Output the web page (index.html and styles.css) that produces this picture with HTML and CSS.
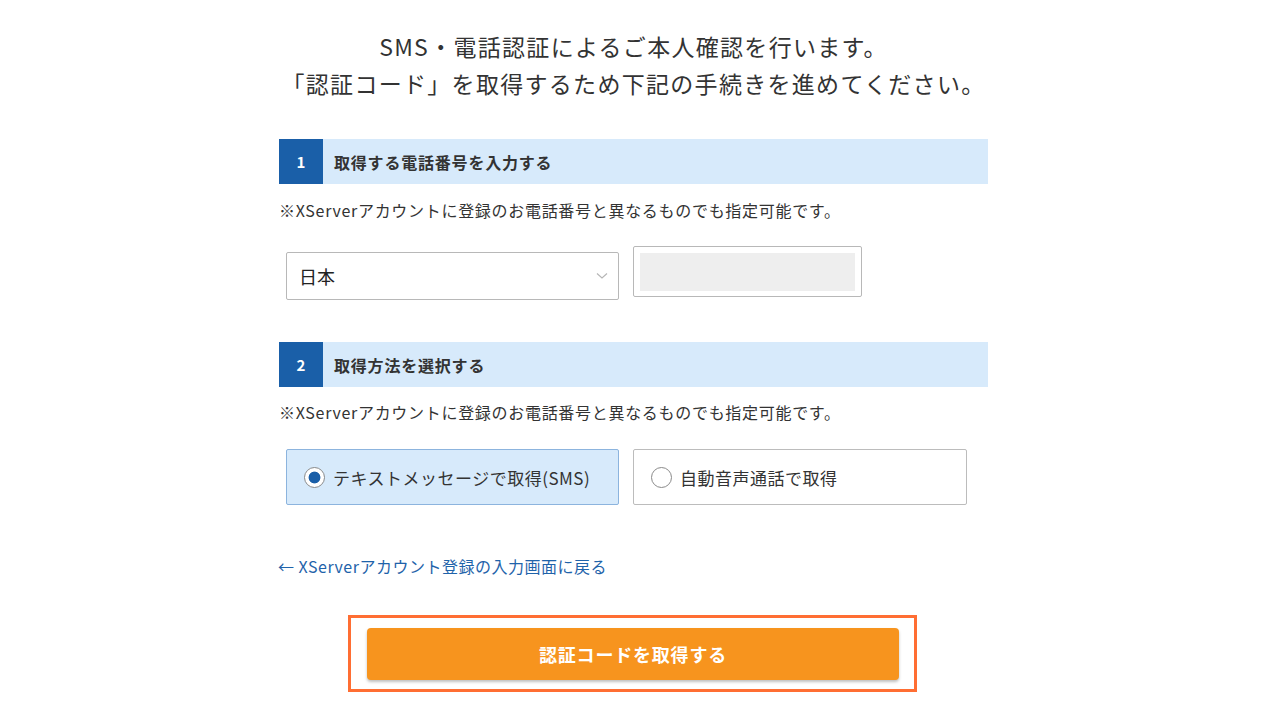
FILE: index.html
```html
<!DOCTYPE html>
<html lang="ja">
<head>
<meta charset="utf-8">
<title>SMS・電話認証</title>
<link rel="stylesheet" href="styles.css">
</head>
<body>
<main class="page">
  <h1 class="title">SMS・電話認証によるご本人確認を行います。<br>「認証コード」を取得するため下記の手続きを進めてください。</h1>

  <section class="step">
    <div class="step-head"><span class="step-num">1</span><span class="step-label">取得する電話番号を入力する</span></div>
    <p class="note">※XServerアカウントに登録のお電話番号と異なるものでも指定可能です。</p>
    <div class="phone-row">
      <div class="select">
        <span class="select-text">日本</span>
        <svg class="chev" width="12" height="8" viewBox="0 0 12 8"><polyline points="1,1.5 6,6 11,1.5" fill="none" stroke="#b5b5b5" stroke-width="1.1"/></svg>
      </div>
      <div class="phone-input"><div class="phone-fill"></div></div>
    </div>
  </section>

  <section class="step step2">
    <div class="step-head"><span class="step-num">2</span><span class="step-label">取得方法を選択する</span></div>
    <p class="note">※XServerアカウントに登録のお電話番号と異なるものでも指定可能です。</p>
    <div class="method-row">
      <div class="method selected"><span class="radio on"></span><span class="method-text">テキストメッセージで取得(SMS)</span></div>
      <div class="method"><span class="radio"></span><span class="method-text">自動音声通話で取得</span></div>
    </div>
  </section>

  <a class="back" href="#">← XServerアカウント登録の入力画面に戻る</a>

  <div class="submit-wrap">
    <div class="submit-frame">
      <button class="submit">認証コードを取得する</button>
    </div>
  </div>
</main>
</body>
</html>
```

FILE: styles.css
```css
html, body {
  margin: 0;
  padding: 0;
  background: #ffffff;
}
body {
  font-family: "Noto Sans CJK JP", "Noto Sans", sans-serif;
  color: #333333;
}
.page {
  width: 709px;
  margin-left: 279px;
  padding-top: 28px;
}
.title {
  margin: 0;
  text-align: center;
  font-size: 23px;
  font-weight: 400;
  line-height: 37px;
  letter-spacing: 1.3px;
  color: #333333;
}
.step {
  margin-top: 37px;
}
.step2 {
  margin-top: 42px;
}
.step-head {
  display: flex;
  align-items: center;
  height: 45px;
  background: #d7eafb;
}
.step-num {
  width: 44px;
  height: 45px;
  background: #1a5fa8;
  color: #ffffff;
  font-weight: 700;
  font-size: 15px;
  display: flex;
  align-items: center;
  justify-content: center;
}
.step-label {
  margin-left: 11px;
  font-size: 16px;
  font-weight: 700;
  letter-spacing: 0.8px;
  color: #333333;
}
.note {
  margin: 14px 0 0;
  font-size: 16px;
  line-height: 24px;
  letter-spacing: 0.7px;
  color: #333333;
}
.step2 .note {
  margin-top: 13px;
}
.phone-row {
  display: flex;
  align-items: flex-start;
  gap: 14px;
  margin-top: 24px;
  padding-left: 7px;
}
.select {
  box-sizing: border-box;
  width: 333px;
  height: 48px;
  margin-top: 6px;
  border: 1px solid #b8b8b8;
  border-radius: 2px;
  display: flex;
  align-items: center;
  justify-content: space-between;
  padding: 0 10px 0 12px;
  background: #ffffff;
}
.select-text {
  font-size: 18px;
  color: #222222;
}
.chev {
  display: block;
}
.phone-input {
  box-sizing: border-box;
  width: 229px;
  height: 51px;
  border: 1px solid #b8b8b8;
  border-radius: 2px;
  padding: 6px 6px 5px;
  background: #ffffff;
}
.phone-fill {
  height: 100%;
  background: #eeeeee;
}
.method-row {
  display: flex;
  gap: 14px;
  margin-top: 25px;
  padding-left: 7px;
}
.method {
  box-sizing: border-box;
  width: 334px;
  height: 56px;
  border: 1px solid #bcbcbc;
  border-radius: 2px;
  display: flex;
  align-items: center;
  padding-left: 17px;
  background: #ffffff;
}
.method.selected {
  width: 333px;
  background: #d7eafb;
  border-color: #8cb4de;
}
.radio {
  box-sizing: border-box;
  width: 21px;
  height: 21px;
  border-radius: 50%;
  border: 1px solid #8a8a8a;
  background: #ffffff;
  flex: none;
}
.radio.on {
  background: radial-gradient(circle, #1a5fa8 0, #1a5fa8 5.5px, #ffffff 6.3px);
}
.method-text {
  margin-left: 8px;
  font-size: 17px;
  letter-spacing: 0.5px;
  color: #333333;
}
.back {
  display: block;
  margin-top: 50px;
  margin-left: -1px;
  font-size: 16px;
  line-height: 22px;
  letter-spacing: 0.5px;
  color: #1f63aa;
  text-decoration: none;
}
.submit-wrap {
  display: flex;
  justify-content: center;
  margin-top: 38px;
}
.submit-frame {
  box-sizing: border-box;
  width: 569px;
  height: 77px;
  border: 3px solid #ff6e33;
  padding: 10px 15px 9px 16px;
  margin-right: 2px;
}
.submit {
  display: flex;
  align-items: center;
  justify-content: center;
  width: 100%;
  height: 52px;
  border: none;
  border-radius: 4px;
  background: #f7941e;
  box-shadow: 0 2px 3px rgba(0, 0, 0, 0.25);
  color: #ffffff;
  font-family: "Noto Sans CJK JP", "Noto Sans", sans-serif;
  font-size: 18px;
  font-weight: 700;
  letter-spacing: 0.8px;
}
```
